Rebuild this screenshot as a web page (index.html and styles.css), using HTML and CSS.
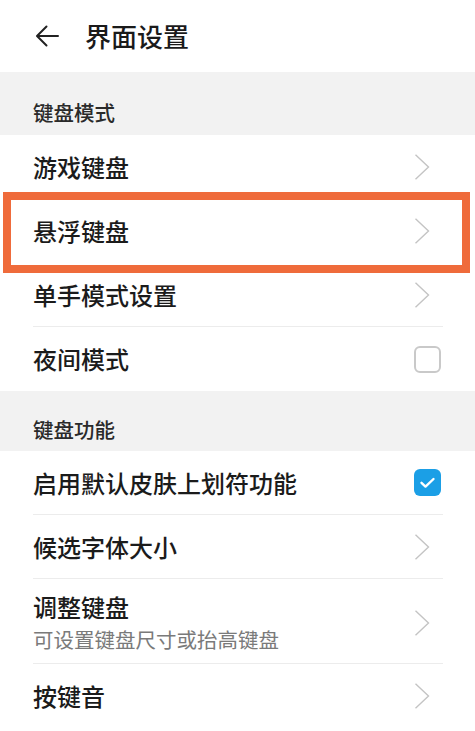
FILE: index.html
```html
<!DOCTYPE html>
<html lang="zh-CN">
<head>
<meta charset="utf-8">
<title>界面设置</title>
<link rel="stylesheet" href="styles.css">
</head>
<body>
<div class="page">
  <header class="topbar">
    <svg class="back" width="24" height="22" viewBox="0 0 24 22" aria-hidden="true">
      <path d="M23 11H2.5M11.5 1.5L2 11l9.5 9.5" fill="none" stroke="#222" stroke-width="2" stroke-linecap="round" stroke-linejoin="round"/>
    </svg>
    <h1 class="title">界面设置</h1>
  </header>

  <div class="section s1">键盘模式</div>
  <ul class="list">
    <li class="row"><span class="label">游戏键盘</span><span class="trail"><svg class="chev" width="27" height="26" viewBox="0 0 27 26"><path d="M1.5 0.8L14.5 13L1.5 25.2" fill="none" stroke="#c4c4c4" stroke-width="1.4"/></svg></span></li>
    <li class="row selected"><span class="label">悬浮键盘</span><span class="trail"><svg class="chev" width="27" height="26" viewBox="0 0 27 26"><path d="M1.5 0.8L14.5 13L1.5 25.2" fill="none" stroke="#c4c4c4" stroke-width="1.4"/></svg></span></li>
    <li class="row"><span class="label">单手模式设置</span><span class="trail"><svg class="chev" width="27" height="26" viewBox="0 0 27 26"><path d="M1.5 0.8L14.5 13L1.5 25.2" fill="none" stroke="#c4c4c4" stroke-width="1.4"/></svg></span></li>
    <li class="row"><span class="label">夜间模式</span><span class="trail"><span class="box"></span></span></li>
  </ul>

  <div class="section s2">键盘功能</div>
  <ul class="list">
    <li class="row"><span class="label">启用默认皮肤上划符功能</span><span class="trail"><span class="box checked"><svg width="27" height="27" viewBox="0 0 27 27"><path d="M7.5 13.8l4 3.8 8-7.6" fill="none" stroke="#fff" stroke-width="2.4" stroke-linecap="round" stroke-linejoin="round"/></svg></span></span></li>
    <li class="row"><span class="label">候选字体大小</span><span class="trail"><svg class="chev" width="27" height="26" viewBox="0 0 27 26"><path d="M1.5 0.8L14.5 13L1.5 25.2" fill="none" stroke="#c4c4c4" stroke-width="1.4"/></svg></span></li>
    <li class="row double"><span class="texts"><span class="label">调整键盘</span><span class="sub">可设置键盘尺寸或抬高键盘</span></span><span class="trail"><svg class="chev" width="27" height="26" viewBox="0 0 27 26"><path d="M1.5 0.8L14.5 13L1.5 25.2" fill="none" stroke="#c4c4c4" stroke-width="1.4"/></svg></span></li>
    <li class="row"><span class="label">按键音</span><span class="trail"><svg class="chev" width="27" height="26" viewBox="0 0 27 26"><path d="M1.5 0.8L14.5 13L1.5 25.2" fill="none" stroke="#c4c4c4" stroke-width="1.4"/></svg></span></li>
  </ul>

  <div class="highlight" aria-hidden="true"></div>
</div>
</body>
</html>
```

FILE: styles.css
```css
* { box-sizing: border-box; }
html, body {
  margin: 0;
  padding: 0;
  background: #ffffff;
}
body {
  font-family: "Noto Sans CJK SC", "Noto Sans", sans-serif;
  color: #1b1b1b;
  overflow: hidden;
}
.page {
  position: relative;
  width: 475px;
  height: 731px;
  overflow: hidden;
}
.topbar {
  height: 72px;
  display: flex;
  align-items: center;
  padding-left: 35px;
}
.back {
  display: block;
  margin-right: 26px;
}
.title {
  margin: 0;
  font-size: 26px;
  font-weight: 500;
  line-height: 30px;
  color: #1a1a1a;
}
.section {
  background: #f2f2f2;
  padding-left: 33px;
  display: flex;
  align-items: flex-end;
  font-size: 20.5px;
  font-weight: 500;
  line-height: 24px;
  color: #2a2a2a;
}
.s1 { height: 63px; padding-bottom: 11px; }
.s2 { height: 60px; padding-bottom: 10px; }
.list {
  list-style: none;
  margin: 0;
  padding: 0 32px 0 33px;
}
.row {
  display: flex;
  align-items: center;
  justify-content: space-between;
  min-height: 64px;
  border-bottom: 1px solid #ececec;
}
.row:last-child { border-bottom: none; }
.row.selected { border-bottom-color: transparent; }
.row.double {
  min-height: 84px;
  padding: 12px 0 8px;
}
.label {
  font-size: 24px;
  font-weight: 500;
  line-height: 32px;
  color: #1b1b1b;
}
.texts {
  display: flex;
  flex-direction: column;
}
.sub {
  font-size: 20.5px;
  line-height: 32px;
  color: #7a7a7a;
}
.trail {
  width: 27px;
  margin-right: 2px;
  display: flex;
  align-items: center;
}
.chev { display: block; }
.box {
  display: block;
  width: 27px;
  height: 27px;
  border: 2px solid #c9c9c9;
  border-radius: 6px;
}
.box.checked {
  border: none;
  background: #1b9fe6;
}
.box.checked svg { display: block; }
.highlight {
  position: absolute;
  left: 3px;
  top: 192px;
  width: 467px;
  height: 81px;
  border: 8px solid #ef6b3b;
}
```
